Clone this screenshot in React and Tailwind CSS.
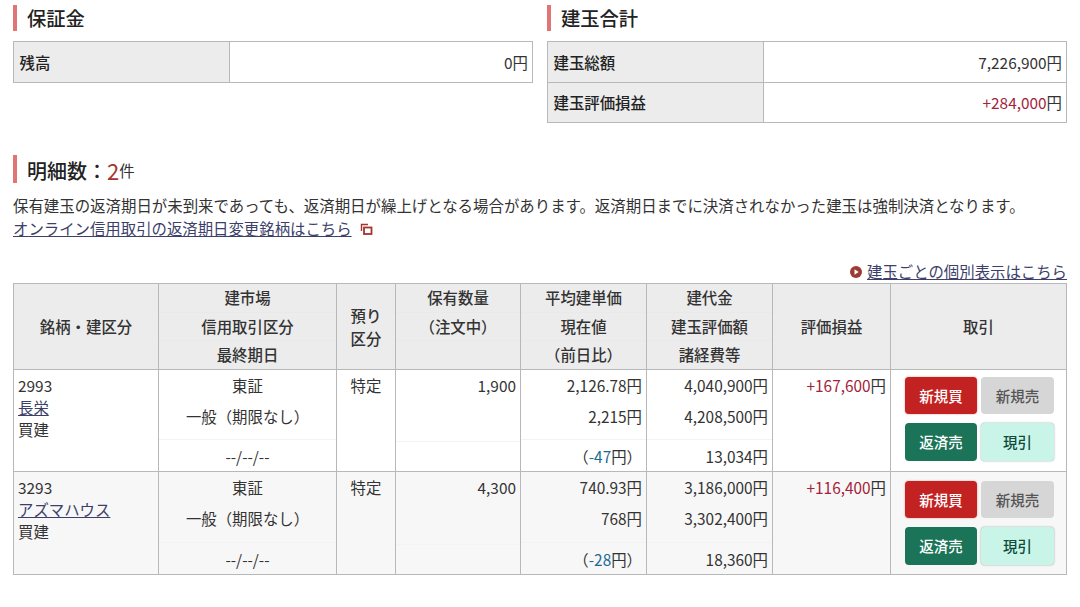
import React from 'react';

const FONT = "font-['Noto_Sans_CJK_JP','Noto_Sans',sans-serif]";

const Heading = ({ tall, children }) => (
    <h2 className={`flex items-center border-l-[4px] border-[#df7575] pl-[10px] font-medium text-[#222] ${tall ? 'h-[28px] pt-[3px] text-[20px]' : 'h-[26px] text-[19.3px]'}`}>
        {children}
    </h2>
);

const SummaryTable = ({ rows }) => (
    <div className="mt-[10px] border border-[#b8b8b8] border-b-0">
        {rows.map((row) => (
            <div key={row.label} className="flex h-[41px] even:h-[40px] border-b border-[#b8b8b8]">
                <div className="flex items-center w-[216px] bg-[#ececec] border-r border-[#b8b8b8] pl-[5.5px] pt-[1px] font-medium text-[#222]">
                    {row.label}
                </div>
                <div className="flex flex-1 items-center justify-end pr-[4px] pt-[1px]">
                    <span className={row.red ? 'text-[#a3233a]' : ''}>{row.value}</span>円
                </div>
            </div>
        ))}
    </div>
);

// three stacked lines inside a header cell
const HeadLines = ({ lines }) => (
    <div className="flex flex-col h-[85px]">
        {lines.map((line, i) => (
            <div
                key={i}
                className={`flex items-center justify-center h-[28px] ${i > 0 ? 'border-t border-[#e9e9e9]' : ''}`}
            >
                {line}
            </div>
        ))}
    </div>
);

// three stacked lines inside a body cell, the third one sits lower
const BodyLines = ({ lines, center, tall }) => {
    const pad = center ? '' : 'pr-[4px]';
    return (
        <div className={`flex flex-col ${tall ? 'h-[102px]' : 'h-[101px]'} ${center ? 'text-center' : 'text-right'}`}>
            <div className={`h-[31px] leading-[31px] ${pad}`}>{lines[0]}</div>
            <div className={`${tall ? 'h-[41px]' : 'h-[40px]'} leading-[31px] ${pad}`}>{lines[1]}</div>
            <div className={`flex-1 pt-[2px] leading-[29px] border-t border-[#f3f3f3] ${pad}`}>{lines[2]}</div>
        </div>
    );
};

const OrderButton = ({ className, children }) => (
    <div className={`flex items-center justify-center rounded-[4px] text-[14.5px] font-medium ${className}`}>
        {children}
    </div>
);

const rows = [
    {
        code: '2993', name: '長栄', market: '東証', qty: '1,900',
        avg: '2,126.78', now: '2,215', diff: '-47',
        cost: '4,040,900', value: '4,208,500', fee: '13,034', pl: '+167,600', bg: 'bg-white',
    },
    {
        code: '3293', name: 'アズマハウス', market: '東証', qty: '4,300',
        avg: '740.93', now: '768', diff: '-28',
        cost: '3,186,000', value: '3,302,400', fee: '18,360', pl: '+116,400', bg: 'bg-[#f7f7f7]', tall: true,
    },
];

const th = 'border border-[#b8b8b8] bg-[#ececec] font-medium text-[#333] p-0 align-middle text-center';
const td = 'border border-[#b8b8b8] p-0 align-top';

export default function App() {
    return (
        <div className={`${FONT} w-[1080px] h-[607px] bg-white text-[15.4px] text-[#333] overflow-hidden px-[13px] pt-[5px]`}>
            <div className="grid grid-cols-[520px_520px] gap-x-[14px] h-[125px]">
                <section>
                    <Heading>保証金</Heading>
                    <SummaryTable rows={[{ label: '残高', value: '0' }]} />
                </section>
                <section>
                    <Heading>建玉合計</Heading>
                    <SummaryTable
                        rows={[
                            { label: '建玉総額', value: '7,226,900' },
                            { label: '建玉評価損益', value: '+284,000', red: true },
                        ]}
                    />
                </section>
            </div>

            <div className="mt-[25px]">
                <Heading tall>
                    明細数：<span className="text-[#a3352c] font-normal text-[22px]">2</span>
                    <span className="text-[15.4px] font-normal text-[#333]">件</span>
                </Heading>
            </div>

            <p className="mt-[11px] leading-[23px] text-[15.43px] whitespace-nowrap">
                保有建玉の返済期日が未到来であっても、返済期日が繰上げとなる場合があります。返済期日までに決済されなかった建玉は強制決済となります。
            </p>
            <div className="flex items-center h-[23px]">
                <a className="underline text-[#3d3f6b]">オンライン信用取引の返済期日変更銘柄はこちら</a>
                <svg width="13" height="13" viewBox="0 0 13 13" className="ml-[8px] mt-[1px]" fill="none" stroke="#a3352c">
                    <path d="M1.5 8V1.5H8" strokeWidth="1.4" />
                    <rect x="4" y="4.5" width="7.5" height="6.5" strokeWidth="1.8" />
                </svg>
            </div>

            <div className="flex items-center justify-end mt-[20px] h-[23px]">
                <svg width="12" height="12" viewBox="0 0 12 12" className="mr-[5px]">
                    <circle cx="6" cy="6" r="6" fill="#9c3b35" />
                    <path d="M4.5 3.2 8.7 6 4.5 8.8Z" fill="#fff" />
                </svg>
                <a className="underline text-[#3d3f6b]">建玉ごとの個別表示はこちら</a>
            </div>

            <table className="w-[1053px] table-fixed border-collapse">
                <colgroup>
                    <col className="w-[145px]" />
                    <col className="w-[178px]" />
                    <col className="w-[59px]" />
                    <col className="w-[125px]" />
                    <col className="w-[126px]" />
                    <col className="w-[126px]" />
                    <col className="w-[118px]" />
                    <col className="w-[176px]" />
                </colgroup>
                <thead>
                    <tr className="h-[86px]">
                        <th className={th}>銘柄・建区分</th>
                        <th className={th}><HeadLines lines={['建市場', '信用取引区分', '最終期日']} /></th>
                        <th className={th}>
                            <div className="leading-[23px]">預り<br />区分</div>
                        </th>
                        <th className={th}><HeadLines lines={['保有数量', '（注文中）', '']} /></th>
                        <th className={th}><HeadLines lines={['平均建単価', '現在値', '（前日比）']} /></th>
                        <th className={th}><HeadLines lines={['建代金', '建玉評価額', '諸経費等']} /></th>
                        <th className={th}>評価損益</th>
                        <th className={th}>取引</th>
                    </tr>
                </thead>
                <tbody>
                    {rows.map((row) => (
                        <tr key={row.code} className={row.bg}>
                            <td className={td}>
                                <div className="pl-[4px] pt-[4px] leading-[22px]">
                                    <div>{row.code}</div>
                                    <a className="underline text-[#3d3f6b]">{row.name}</a>
                                    <div>買建</div>
                                </div>
                            </td>
                            <td className={td}>
                                <BodyLines center tall={row.tall} lines={[row.market, '一般（期限なし）', '--/--/--']} />
                            </td>
                            <td className={td}>
                                <div className="text-center leading-[31px]">特定</div>
                            </td>
                            <td className={td}>
                                <BodyLines tall={row.tall} lines={[row.qty, '', '']} />
                            </td>
                            <td className={td}>
                                <BodyLines
                                    tall={row.tall}
                                    lines={[
                                        `${row.avg}円`,
                                        `${row.now}円`,
                                        <span key="diff">（<span className="text-[#1c6b94]">{row.diff}</span>円）</span>,
                                    ]}
                                />
                            </td>
                            <td className={td}>
                                <BodyLines tall={row.tall} lines={[`${row.cost}円`, `${row.value}円`, `${row.fee}円`]} />
                            </td>
                            <td className={td}>
                                <div className="text-right pr-[4px] leading-[31px]">
                                    <span className="text-[#a3233a]">{row.pl}</span>円
                                </div>
                            </td>
                            <td className={td}>
                                <div className={`grid grid-cols-[72px_73px] grid-rows-[37px_38px] gap-x-[4px] gap-y-[9px] pl-[14px] ${row.tall ? 'pt-[9px]' : 'pt-[7px]'}`}>
                                    <OrderButton className="bg-[#c32222] text-white shadow-[0_0_2px_#e88]">新規買</OrderButton>
                                    <OrderButton className="bg-[#d6d6d6] text-[#555]">新規売</OrderButton>
                                    <OrderButton className="bg-[#1b7457] text-white">返済売</OrderButton>
                                    <OrderButton className="bg-[#c8f5e8] text-[#0f4a3a] shadow-[0_0_2px_#999]">現引</OrderButton>
                                </div>
                            </td>
                        </tr>
                    ))}
                </tbody>
            </table>
        </div>
    );
}
